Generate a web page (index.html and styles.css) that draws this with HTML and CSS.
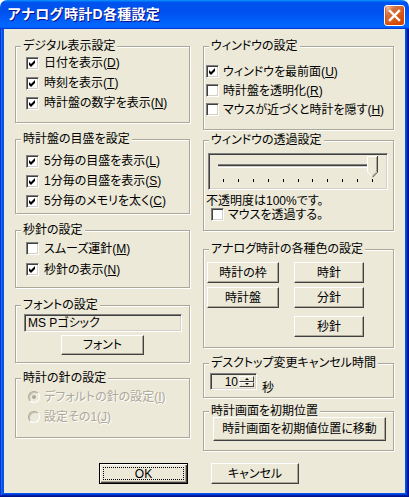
FILE: index.html
```html
<!DOCTYPE html>
<html>
  <head>
    <meta charset="utf-8">
    <title>アナログ時計D各種設定</title>
    <link rel="stylesheet" href="styles.css">
  </head>
  <body>
    <div class="window">
      <div class="title-bar">
        <span class="title-text">アナログ時計D各種設定</span>
        <button class="close-btn" aria-label="閉じる">
          <svg width="19" height="19" viewBox="0 0 19 19"><path d="M5 5 L14 14 M14 5 L5 14" stroke="#fff" stroke-width="2.4" stroke-linecap="square"/></svg>
        </button>
      </div>
      <div class="frame">
        <div class="client">
          <div class="columns">
            <!-- left column -->
            <div class="col col-left">
              <div class="group g-digital">
                <div class="group-title">デジタル表示設定</div>
                <div class="rows">
                  <label class="check"><span class="box"><svg width="11" height="11" viewBox="0 0 11 11"><path d="M2 4 L4 6 L8 2 L8 5 L4 9 L2 7 Z"/></svg></span><span>日付を表示(<u>D</u>)</span></label>
                  <label class="check"><span class="box"><svg width="11" height="11" viewBox="0 0 11 11"><path d="M2 4 L4 6 L8 2 L8 5 L4 9 L2 7 Z"/></svg></span><span>時刻を表示(<u>T</u>)</span></label>
                  <label class="check"><span class="box"><svg width="11" height="11" viewBox="0 0 11 11"><path d="M2 4 L4 6 L8 2 L8 5 L4 9 L2 7 Z"/></svg></span><span>時計盤の数字を表示(<u>N</u>)</span></label>
                </div>
              </div>

              <div class="group g-ticks">
                <div class="group-title">時計盤の目盛を設定</div>
                <div class="rows">
                  <label class="check"><span class="box"><svg width="11" height="11" viewBox="0 0 11 11"><path d="M2 4 L4 6 L8 2 L8 5 L4 9 L2 7 Z"/></svg></span><span>5分毎の目盛を表示(<u>L</u>)</span></label>
                  <label class="check"><span class="box"><svg width="11" height="11" viewBox="0 0 11 11"><path d="M2 4 L4 6 L8 2 L8 5 L4 9 L2 7 Z"/></svg></span><span>1分毎の目盛を表示(<u>S</u>)</span></label>
                  <label class="check"><span class="box"><svg width="11" height="11" viewBox="0 0 11 11"><path d="M2 4 L4 6 L8 2 L8 5 L4 9 L2 7 Z"/></svg></span><span>5分毎のメモリを太く(<u>C</u>)</span></label>
                </div>
              </div>

              <div class="group g-second">
                <div class="group-title">秒針の設定</div>
                <div class="rows">
                  <label class="check"><span class="box"></span><span>スムーズ運針(<u>M</u>)</span></label>
                  <label class="check"><span class="box"><svg width="11" height="11" viewBox="0 0 11 11"><path d="M2 4 L4 6 L8 2 L8 5 L4 9 L2 7 Z"/></svg></span><span>秒針の表示(<u>N</u>)</span></label>
                </div>
              </div>

              <div class="group g-font">
                <div class="group-title">フォントの設定</div>
                <div class="font-field sunken">MS Pゴシック</div>
                <button class="btn font-btn">フォント</button>
              </div>

              <div class="group g-hand">
                <div class="group-title">時計の針の設定</div>
                <div class="rows">
                  <label class="radio disabled"><span class="circle"><span class="dot"></span></span><span>デフォルトの針の設定(<u>I</u>)</span></label>
                  <label class="radio disabled"><span class="circle"></span><span>設定その1(<u>J</u>)</span></label>
                </div>
              </div>
            </div>

            <!-- right column -->
            <div class="col col-right">
              <div class="group g-window">
                <div class="group-title">ウィンドウの設定</div>
                <div class="rows">
                  <label class="check"><span class="box"><svg width="11" height="11" viewBox="0 0 11 11"><path d="M2 4 L4 6 L8 2 L8 5 L4 9 L2 7 Z"/></svg></span><span>ウィンドウを最前面(<u>U</u>)</span></label>
                  <label class="check"><span class="box"></span><span>時計盤を透明化(<u>R</u>)</span></label>
                  <label class="check"><span class="box"></span><span>マウスが近づくと時計を隠す(<u>H</u>)</span></label>
                </div>
              </div>

              <div class="group g-alpha">
                <div class="group-title">ウィンドウの透過設定</div>
                <div class="slider sunken">
                  <svg width="178" height="35" viewBox="0 0 178 35">
                    <rect x="9" y="10" width="159" height="1" fill="#808080"/>
                    <rect x="9" y="11" width="159" height="1" fill="#404040"/>
                    <rect x="9" y="12" width="159" height="1" fill="#d4d0c8"/>
                    <rect x="9" y="13" width="159" height="1" fill="#fff"/>
                    <g fill="#000">
                      <rect x="14" y="25" width="1" height="3"/>
                      <rect x="29" y="25" width="1" height="3"/>
                      <rect x="44" y="25" width="1" height="3"/>
                      <rect x="59" y="25" width="1" height="3"/>
                      <rect x="74" y="25" width="1" height="3"/>
                      <rect x="89" y="25" width="1" height="3"/>
                      <rect x="103" y="25" width="1" height="3"/>
                      <rect x="118" y="25" width="1" height="3"/>
                      <rect x="133" y="25" width="1" height="3"/>
                      <rect x="148" y="25" width="1" height="3"/>
                      <rect x="163" y="25" width="1" height="3"/>
                    </g>
                    <path d="M158 2 H169 V18 L163.5 23.5 L158 18 Z" fill="#ece9d8"/>
                    <path d="M158.5 18 V2.5 H168" fill="none" stroke="#fff"/>
                    <path d="M158.5 18 L163 22.5" fill="none" stroke="#fff"/>
                    <path d="M168.5 2 V18.2 L163.5 23.2" fill="none" stroke="#404040"/>
                    <path d="M167.5 3 V17.8 L163.2 22" fill="none" stroke="#aca899"/>
                  </svg>
                </div>
                <div class="opacity-text">不透明度は100%です。</div>
                <label class="check check-mouse"><span class="box"></span><span>マウスを透過する。</span></label>
              </div>

              <div class="group g-color">
                <div class="group-title">アナログ時計の各種色の設定</div>
                <div class="color-grid">
                  <div class="color-col col-a">
                    <button class="btn">時計の枠</button>
                    <button class="btn">時計盤</button>
                  </div>
                  <div class="color-col col-b">
                    <button class="btn">時針</button>
                    <button class="btn">分針</button>
                    <button class="btn btn-second">秒針</button>
                  </div>
                </div>
              </div>

              <div class="group g-cancel">
                <div class="group-title">デスクトップ変更キャンセル時間</div>
                <div class="spin-row">
                  <div class="spin sunken">
                    <span class="spin-field">10</span>
                    <span class="spin-btns">
                      <span class="spin-up"></span>
                      <span class="spin-down"></span>
                    </span>
                  </div>
                  <span class="unit">秒</span>
                </div>
              </div>

              <div class="group g-position">
                <div class="group-title">時計画面を初期位置</div>
                <button class="btn reset-btn">時計画面を初期値位置に移動</button>
              </div>
            </div>
          </div>

          <div class="footer">
            <button class="btn btn-default ok-btn"><span class="focus">OK</span></button>
            <button class="btn cancel-btn">キャンセル</button>
          </div>
        </div>
      </div>
    </div>
  </body>
</html>
```

FILE: styles.css
```css
body {
  margin: 0;
  font-family: "Liberation Sans", "Noto Sans CJK JP", sans-serif;
  font-size: 12px;
  font-feature-settings: "palt";
  color: #000;
}

.window {
  width: 409px;
  height: 497px;
  display: flex;
  flex-direction: column;
  background: #ffffff;
}

/* title bar */
.title-bar {
  height: 29px;
  box-sizing: border-box;
  display: flex;
  align-items: flex-start;
  padding: 0 4px 0 7px;
  border-radius: 7px 7px 0 0;
  background: linear-gradient(180deg, #0997ff, #0053ee 8%, #0050ee 40%, #06f 88%, #06f 93%, #005bff 95%, #003dd7 96%, #003dd7);
}

.title-text {
  margin-top: 5px;
  color: #fff;
  font-weight: bold;
  font-size: 14px;
  line-height: 19px;
  letter-spacing: 0.3px;
  font-feature-settings: normal;
  text-shadow: 1px 1px #0f1089;
}

.close-btn {
  margin: 5px 0 0 auto;
  width: 21px;
  height: 21px;
  padding: 0;
  box-sizing: border-box;
  border: 1px solid #fff;
  border-radius: 3px;
  display: flex;
  align-items: center;
  justify-content: center;
  background: radial-gradient(circle at 90% 90%, #cc4600 0, #dc6527 55%, #cd7546 70%, #ffccb2 90%, #fff 100%);
  box-shadow: inset 0 -1px 2px 1px #da4600;
}

/* window frame */
.frame {
  flex: 1;
  display: flex;
  padding: 0 4px 4px;
  background: #0055ea;
  box-shadow: inset -1px -1px #00138c, inset 1px 0 #0831d9, inset -2px -2px #001ea0, inset 2px 0 #166aee, inset -3px -3px #003bda, inset 3px 0 #0855dd;
}

.client {
  flex: 1;
  background: #ece9d8;
  padding: 17px 0 0 11px;
  display: flex;
  flex-direction: column;
}

.columns {
  display: flex;
  align-items: flex-start;
  gap: 13px;
}

.col {
  display: flex;
  flex-direction: column;
}

.col-left {
  width: 175px;
}

.col-right {
  width: 191px;
}

/* group boxes */
.group {
  box-sizing: border-box;
  border: 1px solid #aca899;
  box-shadow: inset 1px 1px #fff, 1px 1px #fff;
}

.group-title {
  width: fit-content;
  height: 12px;
  line-height: 12px;
  margin: -7px 0 0 5px;
  padding: 0 2px;
  background: #ece9d8;
  white-space: nowrap;
}

.rows {
  display: flex;
  flex-direction: column;
}

.check,
.radio {
  display: flex;
  align-items: center;
  gap: 5px;
  height: 20px;
  line-height: 12px;
  white-space: nowrap;
}

.box {
  width: 13px;
  height: 13px;
  box-sizing: border-box;
  flex: none;
  display: flex;
  background: #fff;
  border: 1px solid;
  border-color: #808080 #fff #fff #808080;
  box-shadow: inset 1px 1px #404040, inset -1px -1px #d4d0c8;
}

.box svg {
  fill: #000;
}

.circle {
  width: 12px;
  height: 12px;
  box-sizing: border-box;
  flex: none;
  display: flex;
  align-items: center;
  justify-content: center;
  border-radius: 50%;
  border: 1px solid;
  border-color: #aca899 #fff #fff #aca899;
  box-shadow: inset 1px 1px #c5c2b2;
  background: #ece9d8;
}

.dot {
  width: 4px;
  height: 4px;
  border-radius: 50%;
  background: #aca899;
}

.disabled {
  color: #aca899;
  text-shadow: 1px 1px #fff;
}

.sunken {
  box-sizing: border-box;
  border: 1px solid;
  border-color: #808080 #fff #fff #808080;
  box-shadow: inset 1px 1px #404040, inset -1px -1px #d4d0c8;
}

.btn {
  box-sizing: border-box;
  display: flex;
  align-items: center;
  justify-content: center;
  height: 21px;
  padding: 0;
  font: inherit;
  line-height: 12px;
  color: #000;
  background: #ece9d8;
  border: 1px solid;
  border-color: #fff #404040 #404040 #fff;
  box-shadow: inset -1px -1px #aca899;
  white-space: nowrap;
}

/* left groups */
.g-digital {
  height: 77px;
}

.g-digital .rows {
  padding: 1px 0 0 10px;
}

.g-ticks {
  margin-top: 16px;
  height: 75px;
}

.g-ticks .rows {
  padding: 6px 0 0 10px;
}

.g-second {
  margin-top: 16px;
  height: 58px;
}

.g-second .rows {
  padding: 2px 0 0 10px;
}

.g-second .check {
  height: 21px;
}

.g-font {
  margin-top: 17px;
  height: 58px;
}

.font-field {
  margin: 3px 0 0 8px;
  width: 158px;
  height: 18px;
  padding-left: 3px;
  line-height: 16px;
  background: #ece9d8;
}

.font-btn {
  margin: 3px auto 0;
  width: 83px;
  height: 20px;
}

.g-hand {
  margin-top: 15px;
  height: 60px;
}

.g-hand .rows {
  padding: 3px 0 0 12px;
}

.g-hand .radio {
  gap: 4px;
}

/* right groups */
.g-window {
  height: 84px;
}

.g-window .rows {
  padding: 10px 0 0 2px;
}

.g-window .check {
  height: 19px;
  gap: 4px;
}

.g-alpha {
  margin-top: 10px;
  height: 91px;
}

.slider {
  margin: 7px 0 0 4px;
  width: 180px;
  height: 37px;
  background: #ece9d8;
}

.slider svg {
  display: block;
}

.opacity-text {
  margin: 5px 0 0 2px;
  height: 12px;
  line-height: 12px;
}

.check-mouse {
  height: 13px;
  margin: 1px 0 0 7px;
  gap: 4px;
}

.g-color {
  margin-top: 18px;
  height: 99px;
}

.color-grid {
  display: flex;
  gap: 15px;
  margin: 7px 0 0 3px;
}

.color-col {
  display: flex;
  flex-direction: column;
  gap: 4px;
}

.col-a .btn {
  width: 72px;
}

.col-b .btn {
  width: 70px;
}

.col-b .btn-second {
  margin-top: 4px;
}

.g-cancel {
  margin-top: 15px;
  height: 35px;
}

.spin-row {
  display: flex;
  align-items: flex-start;
  margin: 4px 0 0 6px;
}

.spin {
  display: flex;
  width: 47px;
  height: 17px;
  padding: 2px;
  background: #ece9d8;
}

.spin-field {
  flex: 1;
  text-align: right;
  padding-right: 1px;
  line-height: 13px;
}

.spin-btns {
  width: 15px;
  display: flex;
  flex-direction: column;
}

.spin-up,
.spin-down {
  flex: 1;
  box-sizing: border-box;
  display: flex;
  align-items: center;
  justify-content: center;
  background: #ece9d8;
  border: 1px solid;
  border-color: #fff #404040 #404040 #fff;
}

.spin-up::after {
  content: "";
  border-left: 2px solid transparent;
  border-right: 2px solid transparent;
  border-bottom: 2px solid #000;
}

.spin-down::after {
  content: "";
  border-left: 2px solid transparent;
  border-right: 2px solid transparent;
  border-top: 2px solid #000;
}

.unit {
  margin: 9px 0 0 5px;
  line-height: 12px;
}

.g-position {
  margin-top: 13px;
  height: 40px;
}

.reset-btn {
  margin: 0 0 0 9px;
  width: 173px;
  height: 24px;
}

/* dialog buttons */
.footer {
  display: flex;
  gap: 23px;
  margin-top: 12px;
  padding-left: 84px;
}

.ok-btn {
  width: 89px;
  padding: 3px;
}

.cancel-btn {
  width: 88px;
}

.btn-default {
  border: 1px solid #000;
  box-shadow: inset 1px 1px #fff, inset -1px -1px #404040, inset -2px -2px #aca899;
}

.focus {
  flex: 1;
  align-self: stretch;
  display: flex;
  align-items: center;
  justify-content: center;
  border: 1px dotted #000;
}
```
